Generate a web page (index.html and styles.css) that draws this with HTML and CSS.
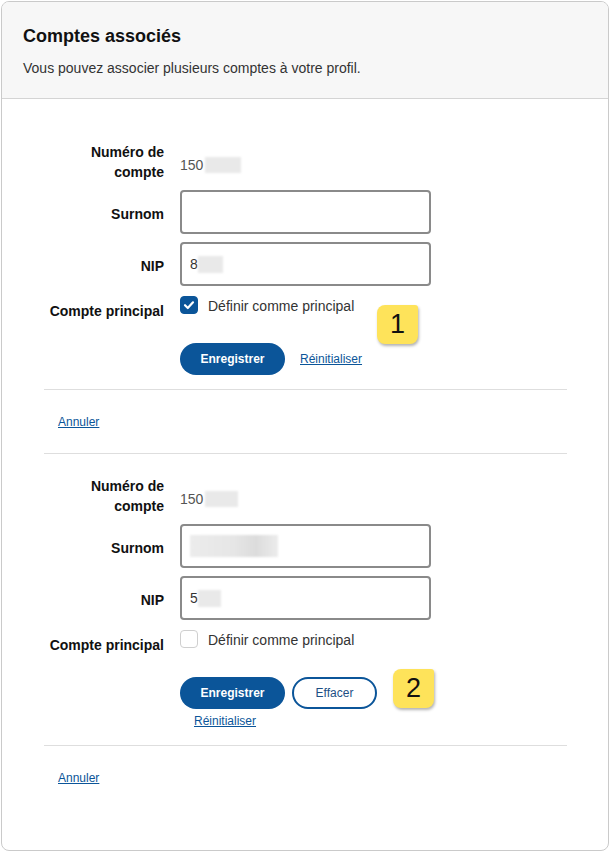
FILE: index.html
```html
<!DOCTYPE html>
<html lang="fr">
<head>
<meta charset="utf-8">
<title>Comptes associés</title>
<link rel="stylesheet" href="styles.css">
</head>
<body>
<div class="card">
  <div class="card-header">
    <h1 class="title">Comptes associés</h1>
    <p class="subtitle">Vous pouvez associer plusieurs comptes à votre profil.</p>
  </div>
  <div class="card-body">
    <div class="account">
      <div class="account-form">
        <div class="grid">
          <div class="label label-wrap">Numéro de compte</div>
          <div class="value">150<span class="blur blur-acct"></span></div>

          <div class="label label-mid">Surnom</div>
          <div class="input"></div>

          <div class="label label-mid">NIP</div>
          <div class="input">8<span class="blur blur-nip"></span></div>

          <div class="label label-check">Compte principal</div>
          <div class="check-field">
            <span class="checkbox checked">
              <svg viewBox="0 0 18 18" width="18" height="18"><path d="M5 9.2 L7.8 12 L13 6.3" fill="none" stroke="#fff" stroke-width="2.2" stroke-linecap="round" stroke-linejoin="round"/></svg>
            </span>
            <span class="check-text">Définir comme principal</span>
          </div>
        </div>
        <div class="actions">
          <button class="btn btn-primary">Enregistrer</button>
          <a class="link link-inline" href="#">Réinitialiser</a>
          <span class="badge badge-1">1</span>
        </div>
      </div>
      <div class="cancel-row"><a class="link" href="#">Annuler</a></div>
    </div>

    <div class="account">
      <div class="account-form">
        <div class="grid">
          <div class="label label-wrap">Numéro de compte</div>
          <div class="value">150<span class="blur blur-acct2"></span></div>

          <div class="label label-mid">Surnom</div>
          <div class="input"><span class="blur blur-nick"></span></div>

          <div class="label label-mid">NIP</div>
          <div class="input">5<span class="blur blur-nip2"></span></div>

          <div class="label label-check">Compte principal</div>
          <div class="check-field">
            <span class="checkbox"></span>
            <span class="check-text">Définir comme principal</span>
          </div>
        </div>
        <div class="actions">
          <button class="btn btn-primary">Enregistrer</button>
          <button class="btn btn-outline">Effacer</button>
          <span class="badge badge-2">2</span>
        </div>
        <div class="link-row"><a class="link" href="#">Réinitialiser</a></div>
      </div>
      <div class="cancel-row"><a class="link" href="#">Annuler</a></div>
    </div>
  </div>
</div>
</body>
</html>
```
FILE: styles.css
```css
* { box-sizing: border-box; }
html, body { background: #fff; }
body {
  margin: 1px 2px 1px 1px;
  font-family: "Liberation Sans", Arial, sans-serif;
  color: #222;
}
.card {
  border: 1px solid #cacaca;
  border-radius: 8px;
  overflow: hidden;
  min-height: 850px;
  background: #fff;
}
.card-header {
  background: #f7f7f7;
  border-bottom: 1px solid #d4d4d4;
  padding: 23px 21px 20px;
}
.title {
  margin: 0;
  font-size: 18px;
  line-height: 22px;
  font-weight: bold;
  color: #111;
}
.subtitle {
  margin: 11px 0 0;
  font-size: 14px;
  line-height: 20px;
  color: #333;
}
.card-body {
  padding: 21px 41px 40px 42px;
}
.account + .account {
  border-top: 1px solid #dedede;
}
.account-form {
  padding: 22px 0 14px;
  border-bottom: 1px solid #dedede;
}
.grid {
  display: grid;
  grid-template-columns: 120px 251px;
  column-gap: 16px;
  row-gap: 8px;
}
.label {
  font-size: 14px;
  line-height: 20px;
  font-weight: bold;
  color: #111;
  text-align: right;
}
.label-mid { align-self: center; padding-top: 3px; }
.label-check { padding-top: 7px; white-space: nowrap; }
.value {
  align-self: center;
  font-size: 14px;
  color: #555;
  display: flex;
  align-items: center;
  padding-top: 6px;
}
.input {
  height: 44px;
  border: 2px solid #8a8a8a;
  border-radius: 4px;
  padding: 0 8px;
  display: flex;
  align-items: center;
  font-size: 14px;
  color: #333;
}
.blur {
  display: inline-block;
  background: #e9e9e9;
  filter: blur(1.2px);
}
.blur-acct { width: 36px; height: 16px; margin-left: 2px; }
.blur-acct2 { width: 33px; height: 16px; margin-left: 2px; }
.blur-nip { width: 25px; height: 17px; margin-left: 0; }
.blur-nip2 { width: 23px; height: 17px; margin-left: 0; }
.blur-nick {
  width: 88px; height: 22px;
  background: linear-gradient(90deg, #ececec 0%, #e6e6e6 50%, #dcdcdc 75%, #ececec 100%);
}
.check-field {
  display: flex;
  align-items: flex-start;
  height: 27px;
}
.checkbox {
  width: 18px;
  height: 18px;
  margin-top: 2px;
  border: 1px solid #cfcfcf;
  border-radius: 4px;
  background: #fff;
  display: inline-flex;
  flex: none;
}
.checkbox.checked {
  background: #0b5599;
  border-color: #0b5599;
}
.checkbox.checked svg { margin: -1px; }
.check-text {
  margin-left: 10px;
  font-size: 14px;
  line-height: 24px;
  color: #333;
}
.actions {
  position: relative;
  margin: 22px 0 0 136px;
  display: flex;
  align-items: center;
  gap: 7px;
}
.btn {
  height: 32px;
  border-radius: 16px;
  font-family: "Liberation Sans", Arial, sans-serif;
  font-size: 12px;
  cursor: pointer;
}
.btn-primary {
  width: 105px;
  background: #0b5599;
  border: none;
  color: #fff;
  font-weight: bold;
}
.btn-outline {
  width: 85px;
  background: #fff;
  border: 2px solid #0b5599;
  color: #1d4f85;
}
.link {
  font-size: 12px;
  line-height: 16px;
  color: #0b5599;
  text-decoration: underline;
}
.link-inline { margin-left: 8px; }
.link-row {
  margin-left: 136px;
  padding: 4px 0 2px 14px;
  font-size: 12px;
  line-height: 16px;
}
.cancel-row {
  padding: 24px 14px 23px;
  font-size: 12px;
  line-height: 16px;
}
.badge {
  position: absolute;
  width: 41px;
  height: 39px;
  background: #fee35a;
  border-radius: 8px 3px 8px 8px;
  box-shadow: 1px 2px 3px rgba(0, 0, 0, 0.3);
  display: flex;
  align-items: center;
  justify-content: center;
  font-size: 27px;
  color: #111;
}
.badge-1 { left: 197px; top: -38px; }
.badge-2 { left: 213px; top: -8px; }
```
